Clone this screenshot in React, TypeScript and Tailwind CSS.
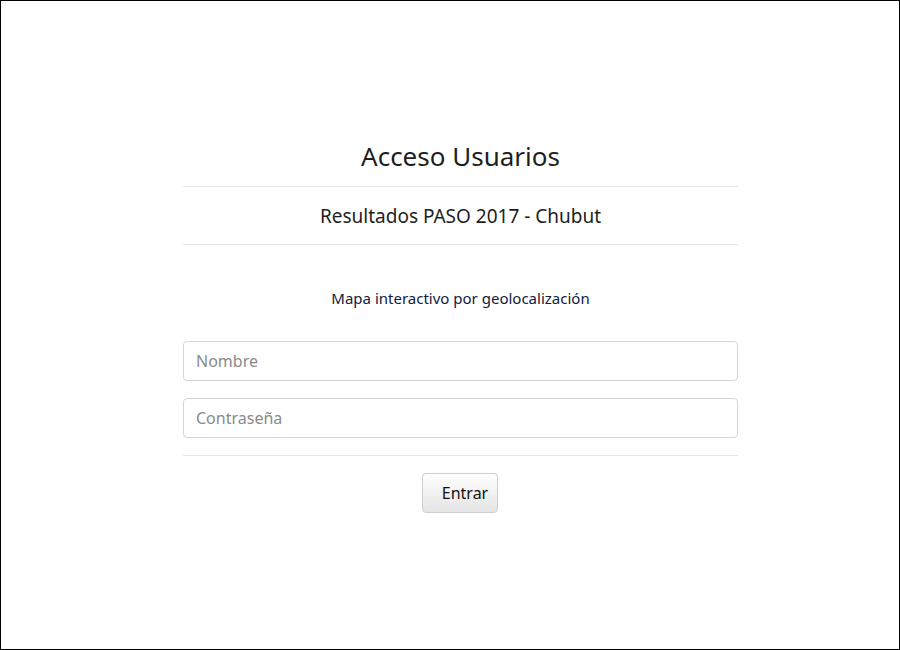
export default function App() {
  return (
    <div className="w-[900px] h-[650px] bg-white border border-black box-border overflow-hidden" style={{ fontFamily: '"Noto Sans", "Open Sans", sans-serif' }}>
      <div className="ml-[182px] w-[555px] pt-[136px] text-[#1e1e1e]">
        <h1 className="text-center text-[26px] leading-[38px] h-[38px]">Acceso Usuarios</h1>
        <div className="mt-[11px] border-t border-[#e6e6e6]" />
        <h2 className="text-center text-[19px] leading-[28px] mt-[15px]">Resultados PASO 2017 - Chubut</h2>
        <div className="mt-[14px] border-t border-[#e6e6e6]" />
        <p className="text-center text-[15px] leading-[22px] mt-[42px] text-[#102040]">Mapa interactivo por geolocalización</p>
        <input className="block mt-[32px] w-full h-[40px] rounded-[4px] border border-[#d6d6d6] px-[12px] text-[16px] placeholder-[#8a8a8a] outline-none" placeholder="Nombre" />
        <input className="block mt-[17px] w-full h-[40px] rounded-[4px] border border-[#d6d6d6] px-[12px] text-[16px] placeholder-[#8a8a8a] outline-none" placeholder="Contraseña" />
        <div className="mt-[17px] border-t border-[#e6e6e6]" />
        <div className="flex justify-center mt-[17px]">
          <button className="ml-[-1px] h-[40px] w-[76px] pl-[10px] rounded-[4px] border border-[#cfcfcf] bg-gradient-to-b from-white to-[#e4e4e4] text-[16px] text-[#111]">Entrar</button>
        </div>
      </div>
    </div>
  );
}
